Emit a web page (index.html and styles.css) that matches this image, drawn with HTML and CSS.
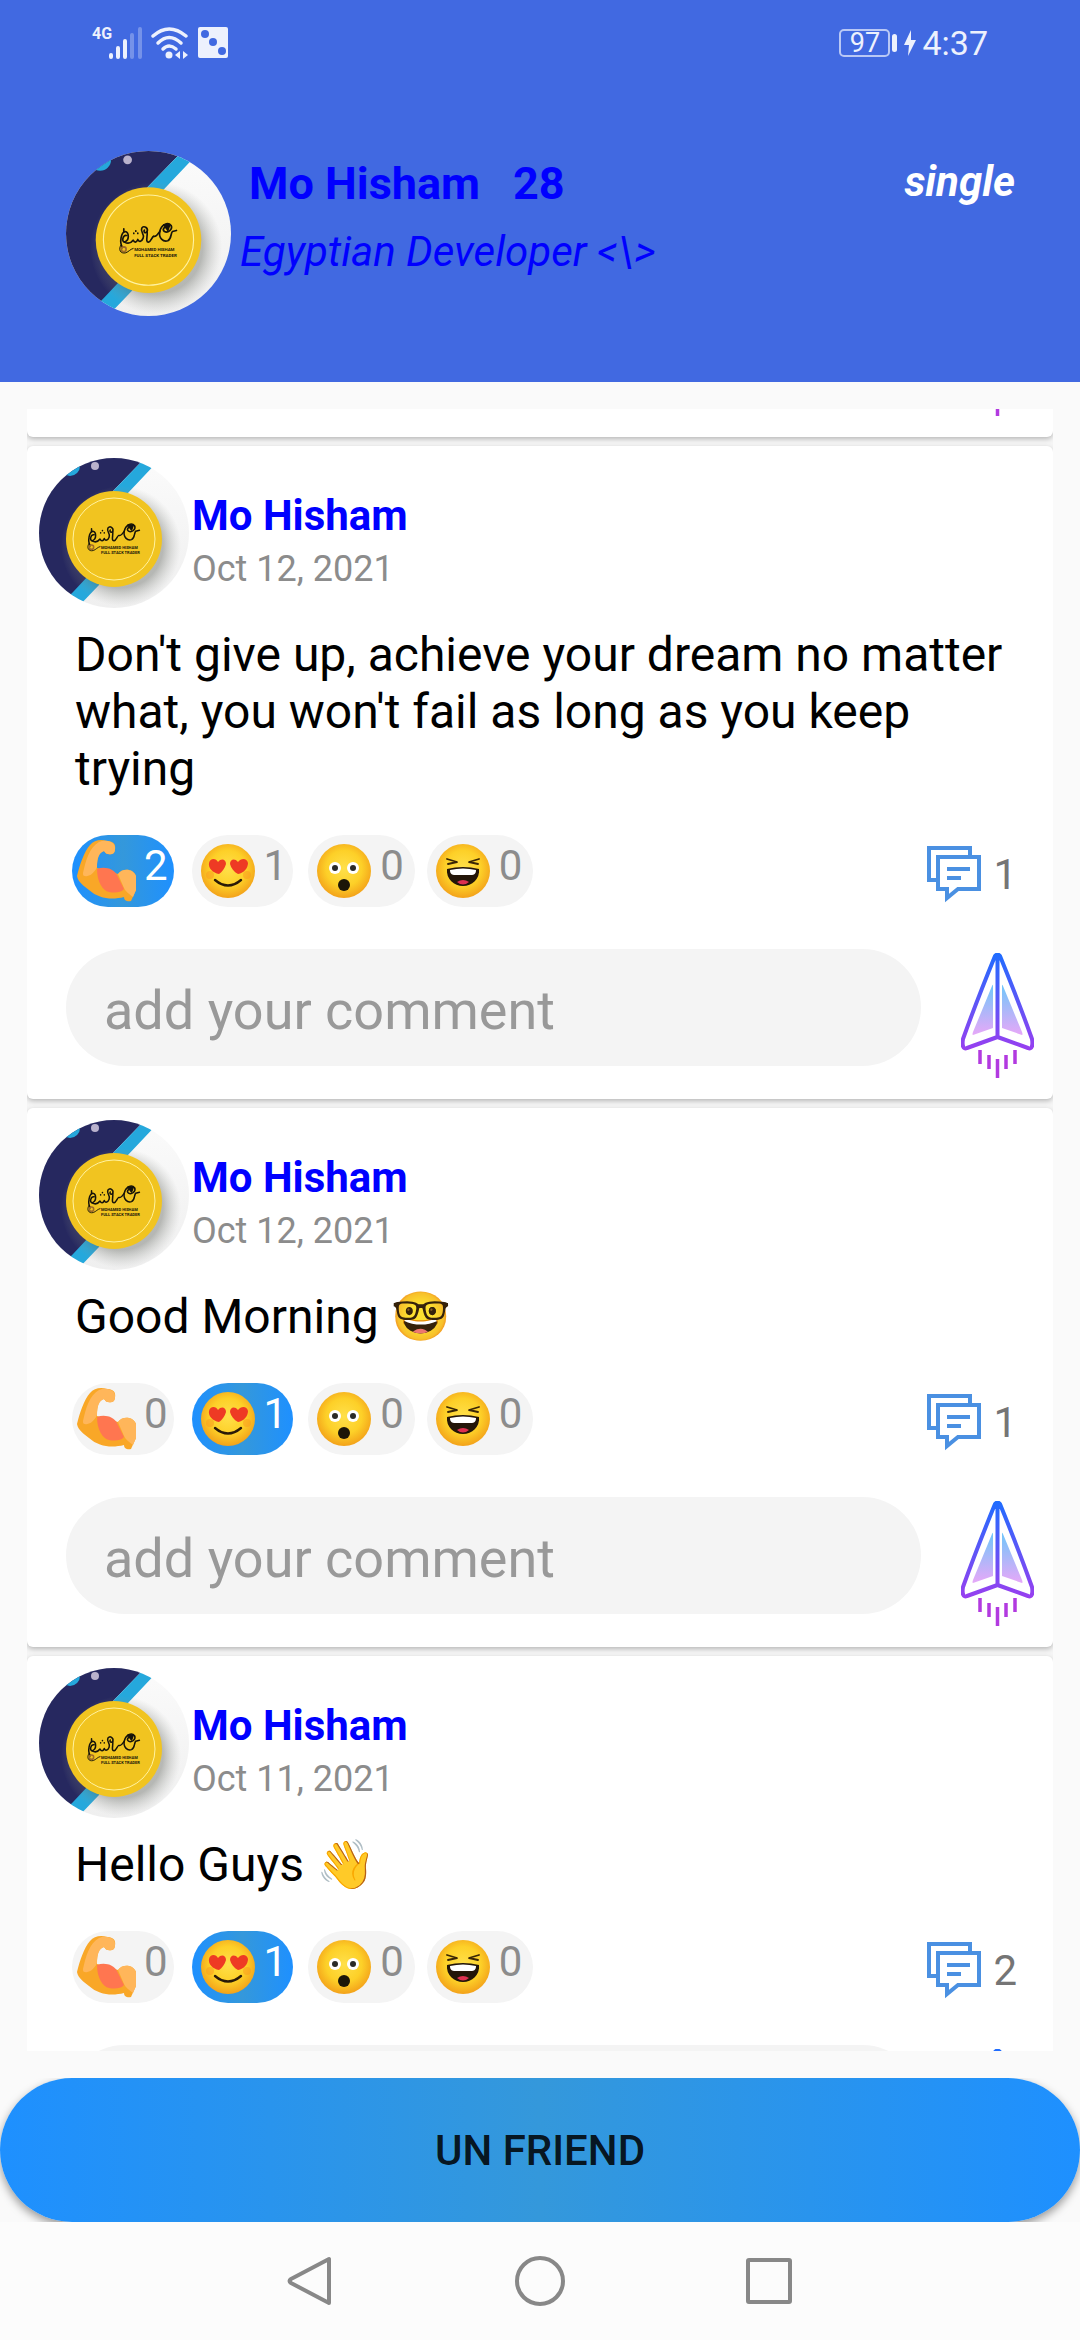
FILE: index.html
```html
<!DOCTYPE html>
<html lang="en">
<head>
    <meta charset="UTF-8">
    <meta name="viewport" content="width=device-width, initial-scale=1.0">
    <title>Mo Hisham</title>
    <link rel="stylesheet" href="styles.css">
</head>
<body>

    <!-- Shared icons -->
    <svg class="sprite" width="0" height="0" aria-hidden="true">
        <defs>
            <clipPath id="avatar-clip"><circle cx="75" cy="75" r="75"/></clipPath>
            <linearGradient id="paper" x1="0" y1="0" x2="0" y2="1">
                <stop offset="0" stop-color="#fbfbfb"/>
                <stop offset="1" stop-color="#efefef"/>
            </linearGradient>
            <radialGradient id="coin-shadow">
                <stop offset="0.7" stop-color="#5c6058" stop-opacity="0.4"/>
                <stop offset="1" stop-color="#9a9d98" stop-opacity="0"/>
            </radialGradient>
            <radialGradient id="face" cx="0.5" cy="0.45" r="0.55">
                <stop offset="0" stop-color="#ffe04a"/>
                <stop offset="0.6" stop-color="#fdd028"/>
                <stop offset="1" stop-color="#f3a21a"/>
            </radialGradient>
            <linearGradient id="plane-line" gradientUnits="userSpaceOnUse" x1="0" y1="0" x2="0" y2="126">
                <stop offset="0" stop-color="#1f6dff"/>
                <stop offset="0.75" stop-color="#9540f0"/>
                <stop offset="1" stop-color="#bb35dd"/>
            </linearGradient>
            <linearGradient id="plane-fill" gradientUnits="userSpaceOnUse" x1="0" y1="30" x2="0" y2="82">
                <stop offset="0" stop-color="#6cc8fa"/>
                <stop offset="1" stop-color="#e6a8f8"/>
            </linearGradient>
        </defs>

        <symbol id="icon-avatar" viewBox="0 0 150 150">
            <g clip-path="url(#avatar-clip)">
                <rect width="150" height="150" fill="url(#paper)"/>
                <path d="M0 0H106L74 33L50 121L28 140L0 150Z" fill="#26285f"/>
                <path d="M106 0H122L88 36L60 127L38 150H19L50 117L74 33Z" fill="#25a8dc"/>
                <circle cx="31" cy="8" r="10" fill="#25a8dc"/>
                <circle cx="56" cy="8" r="4" fill="#b9b2cc"/>
                <circle cx="82" cy="88" r="60" fill="url(#coin-shadow)"/>
                <circle cx="75" cy="81" r="48" fill="#f1c420"/>
                <circle cx="75" cy="81" r="41" fill="none" stroke="#fff2a0" stroke-width="1"/>
                <g transform="translate(38 58) scale(0.303)" fill="none" stroke="#16130a" stroke-width="5" stroke-linecap="round" stroke-linejoin="round">
                    <path d="M44 98C34 84 40 52 52 50C64 52 66 76 50 82C40 80 46 60 56 62"/>
                    <path d="M50 82C60 88 70 84 76 76C80 84 86 84 90 74C94 84 102 80 106 70C112 58 96 52 102 40C108 30 122 40 118 50C112 58 106 50 110 46"/>
                    <path d="M118 50C120 64 112 82 122 82C130 80 132 66 138 64C144 68 150 58 156 50C160 30 180 20 190 32C196 44 180 56 170 50C162 44 170 34 178 38"/>
                    <path d="M156 50C152 70 166 82 180 78C192 72 188 56 194 50L206 47"/>
                    <path d="M48 42V52M78 55V56M84 48V49M90 55V56"/>
                    <path d="M168 30L186 30L180 46Z" fill="#16130a"/>
                    <circle cx="48" cy="103" r="7" stroke="#a06a28"/>
                    <path d="M40 90C30 104 38 118 54 114C64 110 66 104 76 101" stroke-width="3"/>
                </g>
                <text x="62" y="91" class="logo-text">MOHAMED HISHAM</text>
                <text x="62" y="96" class="logo-text">FULL STACK TRADER</text>
            </g>
        </symbol>

        <symbol id="icon-muscle" viewBox="0 0 60 62">
            <path d="M0 36C3 24 7 12 13 5C17 0 24 -1 30 1C36 1 39 4 38 9C38 14 34 15 31 14C29 14 28 12 27 11C22 12 20 17 20 28L41 34C45 28 56 28 59 36V50L54 61C51 62 47 61 47 57C35 60 22 59 12 50C7 46 1 42 0 36Z" fill="#f9a727"/>
            <path d="M6 33C9 20 12 8 22 2C28 -1 39 1 38 9C38 14 34 15 31 14C29 14 28 12 27 11C22 13 20 18 20 27C17 34 11 37 8 36C6 36 6 35 6 33Z" fill="#ffb65a"/>
            <path d="M41 34C45 28 56 28 59 36V50L56 57C52 54 48 51 47 48Z" fill="#ffb65a"/>
            <path d="M20 29C28 26 37 29 40 35L47 49C44 53 37 53 32 52C26 51 20 42 20 29Z" fill="#ff7650"/>
        </symbol>

        <symbol id="icon-love" viewBox="0 0 54 54">
            <circle cx="27" cy="27" r="27" fill="url(#face)"/>
            <circle cx="9" cy="31" r="4" fill="#f99a20" opacity="0.5"/>
            <circle cx="46" cy="31" r="4" fill="#f99a20" opacity="0.5"/>
            <path d="M18 30C12 29 7 24 8 19C9 14 15 14 17 18C20 14 25 15 25 20C24 24 21 28 18 30Z" fill="#ee3a24"/>
            <path d="M37 30C33 28 30 24 29 20C29 15 34 14 37 18C40 14 46 14 47 19C47 24 43 29 37 30Z" fill="#ee3a24"/>
            <path d="M14 36Q27 47 40 36" fill="none" stroke="#2a1a08" stroke-width="2.4" stroke-linecap="round"/>
        </symbol>

        <symbol id="icon-wow" viewBox="0 0 54 54">
            <circle cx="27" cy="27" r="27" fill="url(#face)"/>
            <circle cx="18" cy="24" r="6" fill="#fff"/>
            <circle cx="36" cy="24" r="6" fill="#fff"/>
            <circle cx="18" cy="24" r="3" fill="#2b2b28"/>
            <circle cx="36" cy="24" r="3" fill="#2b2b28"/>
            <circle cx="27" cy="41" r="6" fill="#1c1608"/>
        </symbol>

        <symbol id="icon-laugh" viewBox="0 0 54 54">
            <circle cx="27" cy="27" r="27" fill="url(#face)"/>
            <path d="M11 15L21 18L12 20M43 15L33 18L42 20" fill="none" stroke="#3a2605" stroke-width="1.8" stroke-linecap="round" stroke-linejoin="round"/>
            <path d="M11 25Q27 21 43 25C44 35 36 42 27 42S10 35 11 25Z" fill="#231508"/>
            <path d="M14 26Q27 23 40 26C40 30 38 31 35 31H19C16 31 14 30 14 26Z" fill="#fff"/>
            <path d="M21 38Q27 34 33 38Q27 43 21 38Z" fill="#dd3050"/>
        </symbol>

        <symbol id="icon-comments" viewBox="0 0 54 57">
            <path d="M43 10V2H2V34H10" fill="none" stroke="#4a90e2" stroke-width="4"/>
            <path d="M11 11H52V43H31L20 52V43H11Z" fill="none" stroke="#4a90e2" stroke-width="4"/>
            <path d="M20 23H43M20 32H34" stroke="#4a90e2" stroke-width="4"/>
        </symbol>

        <symbol id="icon-send" viewBox="0 0 73 126">
            <path d="M31 33Q32 30 32 34V75L12 82Q11 82 12 79Z" fill="url(#plane-fill)"/>
            <path d="M42 33Q41 30 41 34V75L61 82Q62 82 61 79Z" fill="url(#plane-fill)"/>
            <path d="M34 3Q36.500 0 39 3C50 30 61 58 71 86C72 92 71 97 67 95L36.500 84L6 95C2 97 1 92 2 86C12 58 23 30 34 3ZM36.500 3V84" fill="none" stroke="url(#plane-line)" stroke-width="4" stroke-linejoin="round"/>
            <path d="M19 97V111M28 102V116M36.500 106V125M45 102V116M54 97V111" fill="none" stroke="#b23ae0" stroke-width="3.500"/>
        </symbol>
    </svg>

    <header class="profile">
        <div class="status-bar">
            <div class="status-group">
                <span class="network">4G</span>
                <svg class="signal" viewBox="0 0 33 32" aria-hidden="true">
                    <g stroke="#edf1fd" stroke-width="4" stroke-linecap="round">
                        <path d="M2 28V30M9 21V30M16 14V30"/>
                        <path d="M23 8V30M31 2V30" opacity="0.3"/>
                    </g>
                </svg>
                <svg class="wifi" viewBox="0 0 37 32" aria-hidden="true">
                    <g fill="none" stroke="#edf1fd" stroke-width="3.500" stroke-linecap="round">
                        <path d="M2 9Q18 -5 35 9"/>
                        <path d="M7 16Q18 5 30 16"/>
                        <path d="M12 22Q18 16 25 22"/>
                    </g>
                    <circle cx="18" cy="28" r="3.500" fill="#edf1fd"/>
                    <path d="M29 24V32L24 28ZM32 24V32L37 28Z" fill="#edf1fd"/>
                </svg>
                <svg class="dice" viewBox="0 0 30 31" aria-hidden="true">
                    <rect width="30" height="31" rx="2" fill="#edf1fd"/>
                    <g fill="#4169e1">
                        <circle cx="7" cy="7" r="4"/>
                        <circle cx="15" cy="15" r="4"/>
                        <circle cx="24" cy="24" r="4"/>
                    </g>
                </svg>
            </div>
            <div class="status-group">
                <span class="battery">97</span>
                <span class="battery-tip"></span>
                <svg class="bolt" viewBox="0 0 12 26" aria-hidden="true">
                    <path d="M7 0L0 15H5L4 26L12 10H7Z" fill="#edf1fd"/>
                </svg>
                <span class="clock">4:37</span>
            </div>
        </div>
        <div class="profile-row">
            <svg class="profile-avatar" role="img" aria-label="Mo Hisham"><use href="#icon-avatar"/></svg>
            <div class="profile-info">
                <h1 class="profile-name"><span>Mo Hisham</span><span>28</span></h1>
                <p class="profile-bio">Egyptian Developer &lt;\&gt;</p>
            </div>
            <span class="profile-status">single</span>
        </div>
    </header>

    <main class="feed">
        <article class="card card-scrolled">
            <button class="send" type="button" aria-label="Send comment"><svg><use href="#icon-send"/></svg></button>
        </article>

        <article class="card">
            <div class="card-head">
                <svg class="avatar" role="img" aria-label="Mo Hisham"><use href="#icon-avatar"/></svg>
                <div class="card-meta">
                    <h2 class="author">Mo Hisham</h2>
                    <time class="date" datetime="2021-10-12">Oct 12, 2021</time>
                </div>
            </div>
            <p class="post-text">Don't give up, achieve your dream no matter what, you won't fail as long as you keep trying</p>
            <div class="reactions">
                <button class="reaction muscle active" type="button"><svg><use href="#icon-muscle"/></svg><span>2</span></button>
                <button class="reaction love" type="button"><svg><use href="#icon-love"/></svg><span>1</span></button>
                <button class="reaction wow" type="button"><svg><use href="#icon-wow"/></svg><span>0</span></button>
                <button class="reaction laugh" type="button"><svg><use href="#icon-laugh"/></svg><span>0</span></button>
                <button class="comments" type="button"><svg><use href="#icon-comments"/></svg><span>1</span></button>
            </div>
            <form class="composer">
                <input class="comment-input" type="text" placeholder="add your comment" aria-label="add your comment">
                <button class="send" type="button" aria-label="Send comment"><svg><use href="#icon-send"/></svg></button>
            </form>
        </article>

        <article class="card">
            <div class="card-head">
                <svg class="avatar" role="img" aria-label="Mo Hisham"><use href="#icon-avatar"/></svg>
                <div class="card-meta">
                    <h2 class="author">Mo Hisham</h2>
                    <time class="date" datetime="2021-10-12">Oct 12, 2021</time>
                </div>
            </div>
            <p class="post-text">Good Morning 🤓</p>
            <div class="reactions">
                <button class="reaction muscle" type="button"><svg><use href="#icon-muscle"/></svg><span>0</span></button>
                <button class="reaction love active" type="button"><svg><use href="#icon-love"/></svg><span>1</span></button>
                <button class="reaction wow" type="button"><svg><use href="#icon-wow"/></svg><span>0</span></button>
                <button class="reaction laugh" type="button"><svg><use href="#icon-laugh"/></svg><span>0</span></button>
                <button class="comments" type="button"><svg><use href="#icon-comments"/></svg><span>1</span></button>
            </div>
            <form class="composer">
                <input class="comment-input" type="text" placeholder="add your comment" aria-label="add your comment">
                <button class="send" type="button" aria-label="Send comment"><svg><use href="#icon-send"/></svg></button>
            </form>
        </article>

        <article class="card">
            <div class="card-head">
                <svg class="avatar" role="img" aria-label="Mo Hisham"><use href="#icon-avatar"/></svg>
                <div class="card-meta">
                    <h2 class="author">Mo Hisham</h2>
                    <time class="date" datetime="2021-10-11">Oct 11, 2021</time>
                </div>
            </div>
            <p class="post-text">Hello Guys 👋</p>
            <div class="reactions">
                <button class="reaction muscle" type="button"><svg><use href="#icon-muscle"/></svg><span>0</span></button>
                <button class="reaction love active" type="button"><svg><use href="#icon-love"/></svg><span>1</span></button>
                <button class="reaction wow" type="button"><svg><use href="#icon-wow"/></svg><span>0</span></button>
                <button class="reaction laugh" type="button"><svg><use href="#icon-laugh"/></svg><span>0</span></button>
                <button class="comments" type="button"><svg><use href="#icon-comments"/></svg><span>2</span></button>
            </div>
            <form class="composer">
                <input class="comment-input" type="text" aria-label="add your comment">
                <button class="send" type="button" aria-label="Send comment"><svg><use href="#icon-send"/></svg></button>
            </form>
        </article>
    </main>

    <div class="action">
        <button class="unfriend" type="button">UN FRIEND</button>
    </div>

    <nav class="nav-bar">
        <button type="button" aria-label="Back">
            <svg viewBox="0 0 50 50"><path d="M43 3V47L5 27Q2 25 5 23Z"/></svg>
        </button>
        <button type="button" aria-label="Home">
            <svg viewBox="0 0 50 50"><circle cx="25" cy="25" r="23"/></svg>
        </button>
        <button type="button" aria-label="Recent apps">
            <svg viewBox="0 0 50 50"><rect x="4" y="4" width="42" height="42" rx="1"/></svg>
        </button>
    </nav>

</body>
</html>
```

FILE: styles.css
```css
* {
    box-sizing: border-box;
}

body {
    display: flex;
    flex-direction: column;
    height: 100vh;
    margin: 0;
    background-color: #fafafa;
    font-family: Roboto, sans-serif;
    color: #000;
}

h1, h2, p {
    margin: 0;
}

button {
    padding: 0;
    border: none;
    background: none;
    font-family: inherit;
    cursor: pointer;
}

svg {
    display: block;
    flex-shrink: 0;
}

.sprite {
    position: absolute;
}

/* Header */
.profile {
    flex-shrink: 0;
    padding-bottom: 66px;
    background-color: #4169e1;
}

.status-bar {
    display: flex;
    justify-content: space-between;
    height: 85px;
    padding: 0 92px;
    color: #edf1fd;
}

.status-group {
    display: flex;
    align-items: center;
}

.network {
    align-self: flex-start;
    width: 17px;
    padding-top: 24px;
    font-size: 16px;
    font-weight: bold;
    line-height: 20px;
    white-space: nowrap;
}

.signal {
    width: 33px;
    height: 32px;
}

.wifi {
    width: 37px;
    height: 32px;
    margin-left: 9px;
}

.dice {
    width: 30px;
    height: 31px;
    margin-left: 10px;
}

.battery {
    width: 51px;
    height: 28px;
    border: 2px solid #b9c8f5;
    border-radius: 5px;
    font-size: 27px;
    line-height: 24px;
    text-align: center;
}

.battery-tip {
    width: 5px;
    height: 18px;
    margin-left: 2px;
    border-radius: 3px;
    background-color: #edf1fd;
}

.bolt {
    width: 12px;
    height: 26px;
    margin: 0 6px 0 7px;
}

.clock {
    font-size: 34px;
    line-height: 42px;
}

.profile-row {
    display: flex;
    align-items: flex-start;
    padding: 66px 65px 0 66px;
}

.profile-avatar {
    width: 165px;
    height: 165px;
}

.profile-info {
    flex: 1;
    padding-left: 9px;
    color: #0000ff;
}

.profile-name {
    display: flex;
    gap: 33px;
    padding: 6px 0 0 9px;
    font-size: 45px;
    line-height: 53px;
}

.profile-bio {
    padding-top: 17px;
    font-size: 42px;
    font-style: italic;
    line-height: 49px;
}

.profile-status {
    padding-top: 6px;
    font-size: 42px;
    font-style: italic;
    font-weight: bold;
    line-height: 49px;
    color: #fff;
}

/* Posts */
.feed {
    display: flex;
    flex: 1;
    flex-direction: column;
    gap: 9px;
    min-height: 0;
    margin: 27px;
    overflow: hidden;
    background-color: #f5f5f5;
}

.card {
    flex-shrink: 0;
    padding: 12px 19px 20px 12px;
    border-radius: 6px;
    background-color: #fff;
    box-shadow: 0 2px 5px rgba(0, 0, 0, 0.25);
}

/* end of the post that is scrolled past */
.card-scrolled {
    display: flex;
    align-items: flex-end;
    justify-content: flex-end;
    height: 28px;
    padding-top: 0;
    border-radius: 0 0 6px 6px;
}

.card-head {
    display: flex;
}

.avatar {
    width: 150px;
    height: 150px;
}

.logo-text {
    font-size: 4px;
    font-weight: bold;
    fill: #16130a;
}

.card-meta {
    padding: 33px 0 0 3px;
}

.author {
    font-size: 42px;
    line-height: 49px;
    color: #0000ff;
}

.date {
    display: block;
    padding-top: 8px;
    font-size: 36px;
    line-height: 42px;
    color: #8c8c8c;
}

.post-text {
    padding: 18px 0 38px 36px;
    font-size: 48px;
    line-height: 57px;
}

.reactions {
    display: flex;
    padding: 0 17px 0 33px;
}

.reaction {
    display: flex;
    align-items: center;
    gap: 9px;
    height: 72px;
    margin-right: 12px;
    padding: 0 11px 0 9px;
    border-radius: 36px;
    background-color: #f4f4f4;
    font-size: 42px;
    line-height: 49px;
    color: #8c8c8c;
}

.reaction svg {
    width: 54px;
    height: 54px;
}

.reaction span {
    align-self: flex-start;
    padding-top: 6px;
}

.reaction.muscle {
    gap: 7px;
    margin-right: 18px;
    padding: 0 6px 0 5px;
}

.reaction.muscle svg {
    width: 60px;
    height: 62px;
}

.reaction.love {
    margin-right: 15px;
    padding-right: 6px;
}

.reaction.active {
    background: linear-gradient(to right, #1e90ff, #3498db, #1e90ff);
    color: #fff;
}

.comments {
    display: flex;
    align-items: center;
    gap: 12px;
    margin-left: auto;
    padding-top: 7px;
    font-size: 42px;
    line-height: 49px;
    color: #757575;
}

.comments svg {
    width: 54px;
    height: 57px;
}

.composer {
    display: flex;
    align-items: flex-start;
    gap: 40px;
    padding: 42px 0 0 27px;
}

.comment-input {
    flex: 1;
    min-width: 0;
    height: 117px;
    padding: 6px 38px 0;
    border: none;
    border-radius: 59px;
    background-color: #f4f4f4;
    font-family: inherit;
    font-size: 54px;
}

.comment-input::placeholder {
    color: #999;
    opacity: 1;
}

.send svg {
    width: 73px;
    height: 126px;
}

.composer .send {
    padding-top: 4px;
}

/* Bottom */
.action {
    flex-shrink: 0;
    overflow: hidden;
}

.unfriend {
    display: block;
    width: 100%;
    height: 144px;
    border-radius: 72px;
    background: linear-gradient(to right, #1e90ff, #3498db, #1e90ff);
    box-shadow: 0 4px 10px rgba(0, 0, 0, 0.4);
    font-size: 42px;
    font-weight: 500;
    color: rgba(0, 0, 0, 0.87);
}

.nav-bar {
    display: flex;
    flex-shrink: 0;
    align-items: center;
    justify-content: center;
    gap: 179px;
    height: 118px;
    background-color: #fcfcfc;
}

.nav-bar svg {
    width: 50px;
    height: 50px;
    fill: none;
    stroke: #888;
    stroke-width: 4px;
    stroke-linejoin: round;
}
```
